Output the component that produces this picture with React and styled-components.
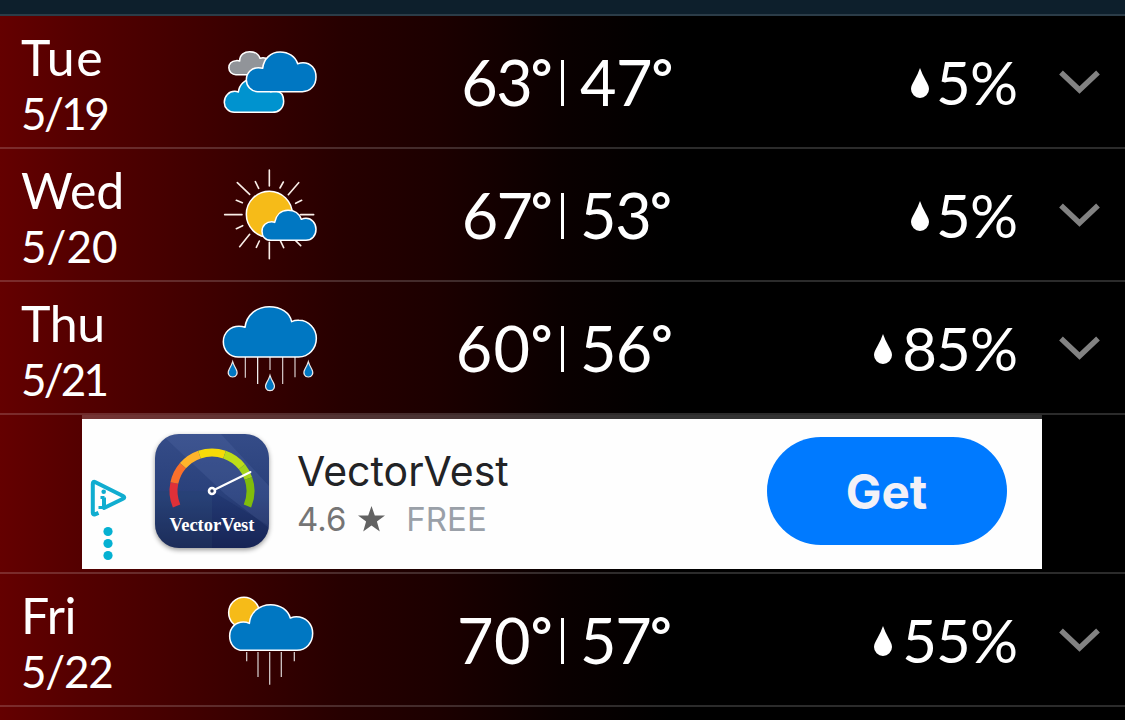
import React from "react";
import styled, { createGlobalStyle } from "styled-components";

const Global = createGlobalStyle`
  * { box-sizing: border-box; }
  body { margin: 0; background: #000; overflow: hidden; }
`;

const Page = styled.main`
  width: 1125px;
  height: 720px;
  overflow: hidden;
  color: #fff;
  font-family: Lato, "Liberation Sans", sans-serif;
  background: linear-gradient(90deg, #640000 0, #540000 80px, #400000 200px, #270000 340px, #1c0000 440px, #0a0000 560px, #000 670px);
`;

const TopBar = styled.header`
  height: 16px;
  background: #0d1f2c;
  border-bottom: 2px solid #2b3c48;
`;

const Row = styled.section`
  display: grid;
  grid-template-columns: 200px 140px 212px 28px 145px 292px 108px;
  height: 133px;
  border-bottom: 2px solid rgba(255, 255, 255, 0.17);
`;

const DateCell = styled.div`
  padding: 12px 0 0 21px;
  white-space: nowrap;
`;

const Day = styled.div`
  font-size: 50px;
  line-height: 58px;
  letter-spacing: ${(p) => p.$track}px;
`;

const DayDate = styled.div`
  font-size: 44px;
  line-height: 54px;
  letter-spacing: ${(p) => p.$track}px;
`;

const Temp = styled.div`
  display: flex;
  justify-content: ${(p) => (p.$high ? "flex-end" : "flex-start")};
  padding-top: 28px;
  font-size: 63px;
  line-height: 76px;
  letter-spacing: ${(p) => p.$track}px;
  white-space: nowrap;
`;

const Degree = styled.span`
  font-size: 50px;
  line-height: 67px;
  font-weight: 700;
  letter-spacing: 0;
`;

const Divider = styled.div`
  width: 3px;
  height: 46px;
  margin: 44px 0 0 9px;
  background: #fff;
`;

const Rain = styled.div`
  display: flex;
  justify-content: flex-end;
  gap: ${(p) => p.$gap}px;
  font-size: 60px;
  line-height: 76px;
  letter-spacing: -1px;
  padding-top: 28px;
  white-space: nowrap;
  svg { margin-top: 24px; }
`;

const Expand = styled.button`
  display: flex;
  padding: 53px 0 0 42px;
  border: 0;
  background: none;
`;

const AdSlot = styled.section`
  height: 159px;
  padding: 0 83px 3px 82px;
  border-bottom: 2px solid rgba(255, 255, 255, 0.17);
`;

const Ad = styled.div`
  display: flex;
  height: 154px;
  border-top: 4px solid rgba(255, 255, 255, 0.2);
  background: #fefefe;
  background-clip: padding-box;
  font-family: Inter, "Liberation Sans", sans-serif;
`;

const AdChoices = styled.div`
  width: 65.5px;
  padding: 59px 0 0 8px;
`;

const AppText = styled.div`
  flex: 1;
  padding: 27.5px 0 0 21.5px;
  white-space: nowrap;
`;

const AppName = styled.div`
  color: #222326;
  font-size: 41px;
  line-height: 48px;
`;

const AppMeta = styled.div`
  display: flex;
  align-items: center;
  font-size: 33px;
  line-height: 48px;
  color: #757575;
  svg { margin: 1px 21px 0 12px; }
`;

const Price = styled.span`
  color: #9aa0a8;
`;

const GetButton = styled.button`
  width: 240px;
  height: 108px;
  margin: 18px 35.5px 0 0;
  border: 0;
  border-radius: 54px;
  background: #007aff;
  color: #f2f1f7;
  font: 700 47.6px/108px Inter, "Liberation Sans", sans-serif;
`;

const Weather = ({ kind }) => {
  const outline = { stroke: "#fff", strokeWidth: 4.6, strokeLinejoin: "round" };
  const content = {
    cloudy: (
      <g transform="translate(0 42)" {...outline}>
        <path fill="#919499" d="M108 134a21 21 0 0 1-1-42q7-1 12 1C119 74 134 65 149 65c15 0 27 8 31 20q9-3 18 0q18 4 18 24q0 25-22 25z" />
        <path fill="#0093cf" d="M103 247a30 30 0 0 1-30-31c0-18 14-32 31-32q6 0 11 2c3-22 19-39 44-39 26 0 45 14 53 38q9-3 16-2c15 2 23 14 23 31 0 20-14 33-34 33z" />
        <path fill="#0077c2" d="M173 185a35 35 0 0 1-34-36c0-20 15-36 36-36q7 0 13 2c3-28 24-49 52-49 26 0 46 14 53 35q8-3 16-3c24 0 39 19 39 43 0 26-18 44-41 44z" />
      </g>
    ),
    partly: (
      <g transform="translate(0 3)">
        <path stroke="#f9eee8" strokeWidth="4.8" strokeLinecap="round" d="M208 60v48M208 277v49M74 194h52M302 194h39M112 98l37 35M296 98l-31 36M149 253l-30 37M278 263l24 24M166 95l10 20M250 96l-10 18M109 151l18 7M305 151l-18 9M109 236l19-9M178 273l-9 19M241 272l10 21" />
        <circle cx="208" cy="193" r="69" fill="#f6bb18" {...outline} />
        <path fill="#0077c2" {...outline} d="M213 271c-18 0-27-12-27-27 0-18 14-29 29-29q5 0 9 2c4-21 18-36 40-36 20 0 34 10 40 27q7-3 14-3c17 0 30 14 30 33 0 20-13 33-30 33z" />
      </g>
    ),
    rain: (
      <g transform="translate(0 9)">
        <path stroke="#d8cccc" strokeWidth="3.6" d="M136 216v62M210 216v39M248 216v81M285 216v61" />
        <path stroke="#fff" strokeWidth="3.6" d="M173 216v81" />
        <path fill="#0077c2" {...outline} d="M115 216c-27 0-45-21-45-46 0-28 22-46 47-46q10 0 18 3c4-37 35-62 73-62 35 0 62 18 67 45q11-5 22-4c29 0 52 25 52 54 0 31-23 56-53 56z" />
        {[[98, 230], [210, 271], [325, 230]].map(([x, y]) => (
          <path key={x} fill="#0077c2" stroke="#eee8e8" strokeWidth="3.6" transform={`translate(${x} ${y})`} d="M0 0Q3 10 10 22C18 36 10 46 0 46S-18 36-10 22Q-3 10 0 0z" />
        ))}
      </g>
    ),
    showers: (
      <g transform="translate(0 18)">
        <path stroke="#cabfbf" strokeWidth="4" d="M140 216v28M174 216v75M209 216v98M244 216v75M283 216v28" />
        <circle cx="132" cy="98" r="46" fill="#f6bb18" {...outline} />
        <path fill="#0077c2" {...outline} d="M129 211c-25 0-40-19-40-43 0-25 18-42 41-42q10 0 18 4c3-32 29-56 64-56 30 0 52 17 59 40q10-4 18-4c28 0 49 22 49 50 0 29-20 51-47 51z" />
      </g>
    ),
  };
  return (
    <svg width="140" height="131" viewBox="0 0 420 393" fill="none">
      {content[kind]}
    </svg>
  );
};

const Drop = () => (
  <svg width="20" height="31" viewBox="0 0 20 31">
    <path fill="#fff" d="M10 0Q12 6 16 13Q19 18 19 21A9 9 0 0 1 1 21Q1 18 4 13Q8 6 10 0z" />
  </svg>
);

const Chevron = () => (
  <svg width="42" height="28" viewBox="0 0 42 28" fill="none">
    <path d="M2 3.5L20.5 21L39 3.5" stroke="#828282" strokeWidth="5.4" />
  </svg>
);

const arc = (from, to, r = 38.5) => {
  const pt = (a) => {
    const t = (a * Math.PI) / 180;
    return `${(57 + r * Math.cos(t)).toFixed(2)} ${(57 + r * Math.sin(t)).toFixed(2)}`;
  };
  return `M${pt(from)}A${r} ${r} 0 0 1 ${pt(to)}`;
};

const GAUGE = [
  [157, 192, "#df3038"],
  [192, 221, "#f9702b"],
  [221, 251, "#ffb42b"],
  [251, 289, "#f6db08"],
  [289, 321, "#bddd18"],
  [321, 341, "#a3d31b"],
  [341, 383, "#80bd0b"],
];

const AppIcon = () => (
  <svg width="128" height="138" viewBox="-7 -15 128 138">
    <defs>
      <linearGradient id="navy" x1="0" y1="0" x2="0" y2="1">
        <stop offset="0" stopColor="#354c88" />
        <stop offset="0.55" stopColor="#29407a" />
        <stop offset="1" stopColor="#1a2554" />
      </linearGradient>
      <clipPath id="tile"><rect width="114" height="114" rx="24" /></clipPath>
      <filter id="soft" x="-20%" y="-20%" width="140%" height="140%"><feGaussianBlur stdDeviation="2.5" /></filter>
    </defs>
    <rect y="2" width="114" height="114" rx="24" fill="#000" opacity="0.4" filter="url(#soft)" />
    <g clipPath="url(#tile)">
      <rect width="114" height="114" fill="url(#navy)" />
      <path d="M6 0H66L114 52V94L70 60Z" fill="#7895d0" opacity="0.13" />
      <path d="M0 57H57V114H0Z" fill="#22446a" opacity="0.25" />
      <path d="M57 57L114 92V114H57Z" fill="#11225a" opacity="0.25" />
    </g>
    {GAUGE.map(([a, b, c]) => (
      <path key={a} d={arc(a, b)} stroke={c} strokeWidth="8" fill="none" />
    ))}
    <path d="M61 55L95.5 38" stroke="#fff" strokeWidth="2" strokeLinecap="round" />
    <circle cx="57" cy="57" r="3" fill="#26345b" stroke="#fff" strokeWidth="2.6" />
    <text x="14.5" y="97" fill="#fff" fontFamily="'Liberation Serif', serif" fontWeight="700" fontSize="18.5" textLength="85" lengthAdjust="spacingAndGlyphs">VectorVest</text>
  </svg>
);

const AdMarks = () => (
  <svg width="40" height="84" viewBox="0 0 40 84" fill="none">
    <path d="M8.5 34.8L5 36.3Q2.8 37.1 2.8 34.5V6Q2.8 2.8 5.5 4.2L33 18Q35.5 19.5 33 20.8L14 30V19.5" stroke="#10add0" strokeWidth="4" strokeLinejoin="round" />
    <circle cx="13.7" cy="13.7" r="2.3" fill="#10add0" />
    <path d="M10.5 19.5h4M8.5 29.5H14" stroke="#10add0" strokeWidth="3" />
    <circle cx="18" cy="53.5" r="4.6" fill="#05b1d2" />
    <circle cx="18" cy="65.5" r="4.6" fill="#05b1d2" />
    <circle cx="18" cy="77.5" r="4.6" fill="#05b1d2" />
  </svg>
);

const Star = () => (
  <svg width="27" height="26" viewBox="0 0 27 26">
    <path fill="#626262" d="M13.5 0L16.8 9.4L27 9.6L18.9 15.6L21.8 25.4L13.5 19.6L5.2 25.4L8.1 15.6L0 9.6L10.2 9.4Z" />
  </svg>
);

const Forecast = ({ day, date, kind, high, low, rain, dayTrack, dateTrack, highTrack, lowTrack }) => (
  <Row>
    <DateCell>
      <Day $track={dayTrack}>{day}</Day>
      <DayDate $track={dateTrack}>{date}</DayDate>
    </DateCell>
    <Weather kind={kind} />
    <Temp $high $track={highTrack}>{high}<Degree>°</Degree></Temp>
    <Divider />
    <Temp $track={lowTrack}>{low}<Degree>°</Degree></Temp>
    <Rain $gap={rain < 10 ? 6 : 9}><Drop />{rain}%</Rain>
    <Expand aria-label="Expand"><Chevron /></Expand>
  </Row>
);

export default function App() {
  return (
    <>
      <Global />
      <Page>
        <TopBar />
        <Forecast day="Tue" date="5/19" kind="cloudy" high={63} low={47} rain={5} dayTrack={1.5} dateTrack={-2.6} highTrack={-1.5} lowTrack={-0.5} />
        <Forecast day="Wed" date="5/20" kind="partly" high={67} low={53} rain={5} dayTrack={0} dateTrack={0} highTrack={-1.8} lowTrack={-1.3} />
        <Forecast day="Thu" date="5/21" kind="rain" high={60} low={56} rain={85} dayTrack={-0.4} dateTrack={-2.8} highTrack={1.2} lowTrack={-0.8} />
        <AdSlot>
          <Ad>
            <AdChoices><AdMarks /></AdChoices>
            <AppIcon />
            <AppText>
              <AppName>VectorVest</AppName>
              <AppMeta>4.6<Star /><Price>FREE</Price></AppMeta>
            </AppText>
            <GetButton>Get</GetButton>
          </Ad>
        </AdSlot>
        <Forecast day="Fri" date="5/22" kind="showers" high={70} low={57} rain={55} dayTrack={-0.4} dateTrack={-1.2} highTrack={0.6} lowTrack={-1.3} />
      </Page>
    </>
  );
}
